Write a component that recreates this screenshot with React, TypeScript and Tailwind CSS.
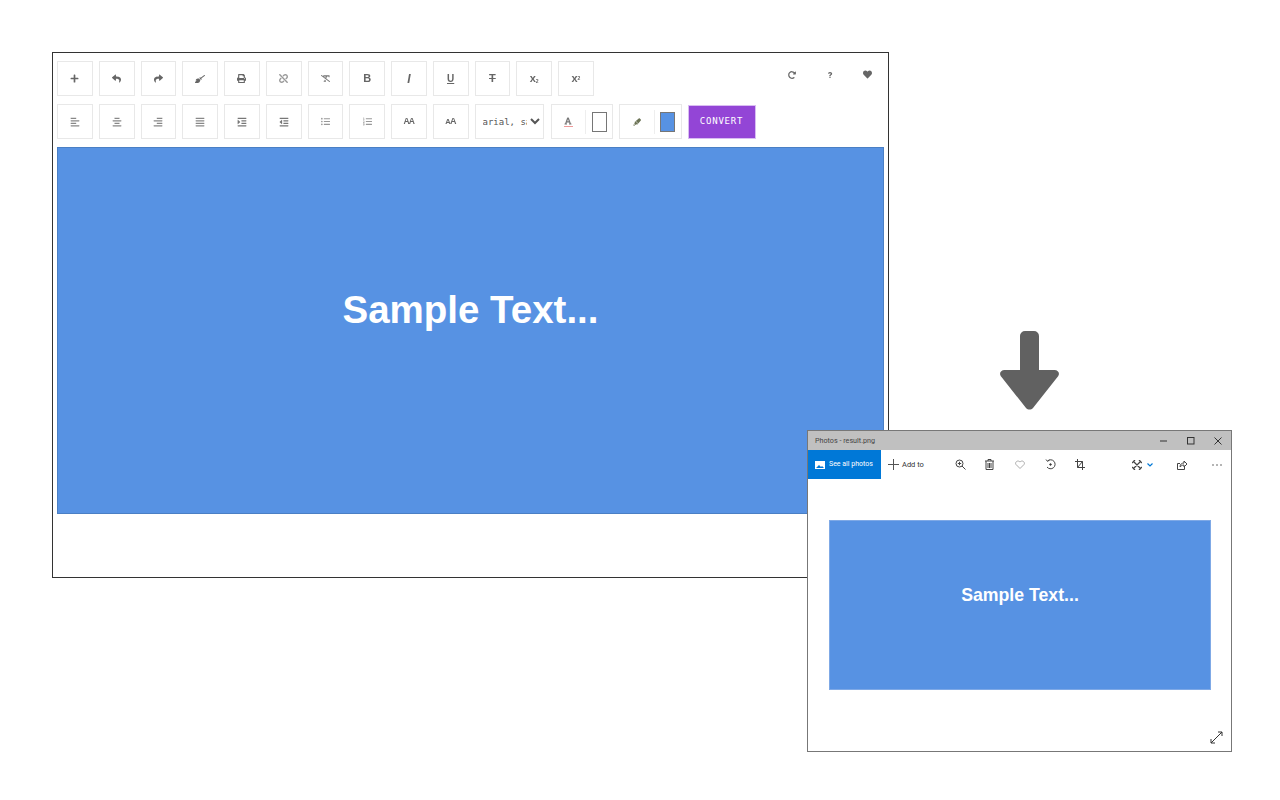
import {
  FaPlus, FaReply, FaShare, FaBroom, FaUnlink, FaAlignLeft, FaAlignCenter, FaAlignRight, FaAlignJustify,
  FaIndent, FaOutdent, FaListUl, FaListOl, FaFont, FaHeart, FaQuestion, FaRedoAlt, FaPrint, FaRemoveFormat, FaHighlighter,
} from "react-icons/fa";
import { ReactNode } from "react";

function ToolBtn({ children }: { children: ReactNode }) {
  return (
    <button className="flex h-[35px] w-[35.75px] shrink-0 items-center justify-center border border-[#e8e8e8] bg-white text-[9px] text-[#666]">
      <span className="flex items-center blur-[0.35px]">{children}</span>
    </button>
  );
}

function Swatch({ color }: { color: string }) {
  return <span className={`block h-[20px] w-[15px] border border-[#767676] ${color}`} />;
}

export default function App() {
  return (
    <div className="relative h-[800px] w-[1280px] overflow-hidden bg-white font-['Liberation_Sans',sans-serif]">
      {/* editor window */}
      <div className="absolute left-[52px] top-[52px] flex h-[526px] w-[837px] flex-col border border-[#333] bg-white pl-1 pt-2">
        <div className="flex items-start gap-[6px]">
          <ToolBtn><FaPlus /></ToolBtn>
          <ToolBtn><FaReply /></ToolBtn>
          <ToolBtn><FaShare /></ToolBtn>
          <ToolBtn><FaBroom className="text-[10px]" /></ToolBtn>
          <ToolBtn><FaPrint /></ToolBtn>
          <ToolBtn><FaUnlink className="text-[#999]" /></ToolBtn>
          <ToolBtn><FaRemoveFormat className="text-[#777]" /></ToolBtn>
          <ToolBtn><span className="text-[11px] font-bold leading-none">B</span></ToolBtn>
          <ToolBtn><span className="text-[12px] font-bold italic leading-none">I</span></ToolBtn>
          <ToolBtn><span className="text-[10px] font-bold leading-none underline">U</span></ToolBtn>
          <ToolBtn><span className="text-[11px] font-bold leading-none line-through">T</span></ToolBtn>
          <ToolBtn><span className="text-[11px] font-bold leading-none">x<sub className="text-[5px]">2</sub></span></ToolBtn>
          <ToolBtn><span className="text-[11px] font-bold leading-none">x<sup className="text-[5px]">2</sup></span></ToolBtn>
          <div className="ml-auto mr-[2px] flex text-[8px] text-[#666]">
            <span className="flex h-[27px] w-[37px] items-center justify-center pr-[3px] blur-[0.3px]"><FaRedoAlt /></span>
            <span className="flex h-[27px] w-[37px] items-center justify-center pr-[2px] text-[6px] blur-[0.3px]"><FaQuestion /></span>
            <span className="flex h-[27px] w-[37px] items-center justify-center text-[9px] blur-[0.3px]"><FaHeart /></span>
          </div>
        </div>
        <div className="mt-2 flex items-center gap-[6px]">
          <ToolBtn><FaAlignLeft className="text-[10px] text-[#888]" /></ToolBtn>
          <ToolBtn><FaAlignCenter className="text-[10px] text-[#888]" /></ToolBtn>
          <ToolBtn><FaAlignRight className="text-[10px] text-[#888]" /></ToolBtn>
          <ToolBtn><FaAlignJustify className="text-[10px] text-[#888]" /></ToolBtn>
          <ToolBtn><FaIndent className="text-[10px] text-[#777]" /></ToolBtn>
          <ToolBtn><FaOutdent className="text-[10px] text-[#777]" /></ToolBtn>
          <ToolBtn><FaListUl className="text-[#999]" /></ToolBtn>
          <ToolBtn><FaListOl className="text-[#999]" /></ToolBtn>
          <ToolBtn><span className="text-[8.5px] font-bold leading-none tracking-[-0.7px]">AA</span></ToolBtn>
          <ToolBtn><span className="font-bold leading-none tracking-[-0.6px]"><span className="text-[7.5px]">A</span><span className="text-[9px]">A</span></span></ToolBtn>
          <select className="h-[35px] w-[69px] shrink-0 border border-[#e8e8e8] bg-white pl-[3px] font-['DejaVu_Sans_Mono',monospace] text-[9px] text-[#555]">
            <option>arial, sans-serif</option>
          </select>
          <div className="ml-[1px] flex h-[35px] w-[62px] items-center border border-[#e8e8e8]">
            <span className="flex h-full w-[33px] flex-col items-center justify-center text-[8px] text-[#777]">
              <FaFont />
              <span className="mt-[1px] block h-[1px] w-[9px] bg-[#e99]" />
            </span>
            <span className="h-[24px] w-[1px] bg-[#eee]" />
            <span className="ml-[6px]"><Swatch color="bg-white" /></span>
          </div>
          <div className="flex h-[35px] w-[63px] items-center border border-[#e8e8e8]">
            <span className="flex h-full w-[34px] items-center justify-center text-[8px] text-[#6b7355] blur-[0.3px]"><FaHighlighter /></span>
            <span className="h-[24px] w-[1px] bg-[#eee]" />
            <span className="ml-[5px]"><Swatch color="bg-[#5792e3]" /></span>
          </div>
          <button className="flex h-[34px] w-[68px] items-center justify-center border border-[#d9bdf2] bg-[#9345d6] font-['DejaVu_Sans_Mono',monospace] text-[9px] tracking-[0.8px] text-white">
            CONVERT
          </button>
        </div>
        <div className="mt-2 flex h-[367px] w-[827px] items-center justify-center border border-[#4a7fc4] bg-[#5792e3] pb-[42px]">
          <span className="text-[38.5px] font-bold text-white">Sample Text...</span>
        </div>
      </div>

      {/* arrow */}
      <svg className="absolute left-[999px] top-[330px]" width="61" height="81" viewBox="0 0 61 81" fill="#616161">
        <path d="M21 6a5 5 0 0 1 5-5h9a5 5 0 0 1 5 5v34h15.500c4 0 6 4 3 7L34 78c-2 2-5 2-7 0L2.500 47c-3-3-1-7 3-7H21z" />
      </svg>

      {/* photos window */}
      <div className="absolute left-[807px] top-[430px] flex h-[322px] w-[425px] flex-col border border-[#777] bg-white font-['Roboto',sans-serif]">
        <div className="flex h-[19px] items-center justify-between bg-[#c0c0c0] pl-[7px] text-[7.2px] text-[#444]">
          <span className="pt-[1px]">Photos - result.png</span>
          <div className="flex items-center text-[#333]">
            <span className="flex w-[27px] justify-center"><svg width="8" height="8" viewBox="0 0 8 8" stroke="#333" fill="none"><path d="M0 4h7" /></svg></span>
            <span className="flex w-[27px] justify-center"><svg width="8" height="8" viewBox="0 0 8 8" stroke="#333" fill="none"><rect x="0.500" y="0.500" width="6.500" height="6.500" /></svg></span>
            <span className="flex w-[27px] justify-center"><svg width="8" height="8" viewBox="0 0 8 8" stroke="#333" fill="none"><path d="M0.5 0.5l7 7M7.5 0.5l-7 7" /></svg></span>
          </div>
        </div>
        <div className="flex h-[29px] items-center text-[7.5px] text-[#333]">
          <div className="flex h-full w-[73px] items-center gap-[4px] bg-[#0078d7] pl-[7px] text-[7px] text-white">
            <svg width="10" height="10" viewBox="0 0 10 10" fill="white"><path d="M0 1h10v8H0z" /><path d="M1 8l3-3 2 2 1-1 2 2z" fill="#0078d7" /></svg>
            See all photos
          </div>
          <div className="ml-[7px] flex w-[44px] items-center gap-[3px]">
            <svg width="11" height="11" viewBox="0 0 11 11" stroke="#555" fill="none"><path d="M5.5 0v11M0 5.5h11" /></svg>
            Add to
          </div>
          <svg className="ml-[23px]" width="11" height="11" viewBox="0 0 11 11" stroke="#444" fill="none"><circle cx="4.500" cy="4.500" r="3.500" /><path d="M7 7l3.500 3.500M2.800 4.500h3.400M4.500 2.800v3.400" /></svg>
          <svg className="ml-[19px]" width="9" height="11" viewBox="0 0 9 11" stroke="#444" fill="none"><path d="M0 2h9M3 2V.5h3V2M1 2v8.500h7V2M3 4v5M4.500 4v5M6 4v5" /></svg>
          <svg className="ml-[21px]" width="10" height="9" viewBox="0 0 10 9" stroke="#aaa" fill="none"><path d="M5 8.500L1 4.500C-.5 2.500 2.500-.5 5 2c2.500-2.500 5.500.5 4 2.500z" /></svg>
          <svg className="ml-[20px]" width="11" height="11" viewBox="0 0 11 11" stroke="#444" fill="none"><path d="M2.500 2A4.500 4.500 0 1 1 2 8M1 .5l1.500 1.800L4.500 1" /><circle cx="5.500" cy="5.500" r=".8" fill="#333" /></svg>
          <svg className="ml-[19px]" width="10" height="11" viewBox="0 0 10 11" stroke="#444" fill="none"><path d="M2.500 0v8.500H10M0 2.500h7.500V11M2.500 8.500l5-6" /></svg>
          <svg className="ml-[47px]" width="10" height="10" viewBox="0 0 10 10" stroke="#444" fill="none" strokeWidth="1.200"><path d="M1 1l8 8M9 1L1 9M0 3l3-3M7 10l3-3M7 0l3 3M0 7l3 3" /></svg>
          <svg className="ml-[5px]" width="6" height="4" viewBox="0 0 6 4" stroke="#0078d7" fill="none" strokeWidth="1.200"><path d="M.5 .5L3 3 5.500 .5" /></svg>
          <svg className="ml-[24px]" width="10" height="10" viewBox="0 0 10 10" stroke="#444" fill="none"><path d="M3 3.500H.5v6h7V7M3 7c0-3 2-4 4-4V1l3 3-3 3V5C5 5 4 6 3 7z" /></svg>
          <svg className="ml-[25px]" width="10" height="2" viewBox="0 0 10 2" fill="#333"><circle cx="1" cy="1" r=".7" /><circle cx="5" cy="1" r=".7" /><circle cx="9" cy="1" r=".7" /></svg>
        </div>
        <div className="relative flex-1">
          <div className="ml-[21px] mt-[41px] flex h-[170px] w-[382px] items-center justify-center border border-[#7fa9e6] bg-[#5792e3] pb-[20px] font-['Liberation_Sans',sans-serif]">
            <span className="text-[17.7px] font-bold text-white">Sample Text...</span>
          </div>
          <svg className="absolute bottom-[7px] right-[8px]" width="13" height="13" viewBox="0 0 13 13" stroke="#333" fill="none"><path d="M1 12L12 1M8 1h4v4M1 8v4h4" /></svg>
        </div>
      </div>
    </div>
  );
}
